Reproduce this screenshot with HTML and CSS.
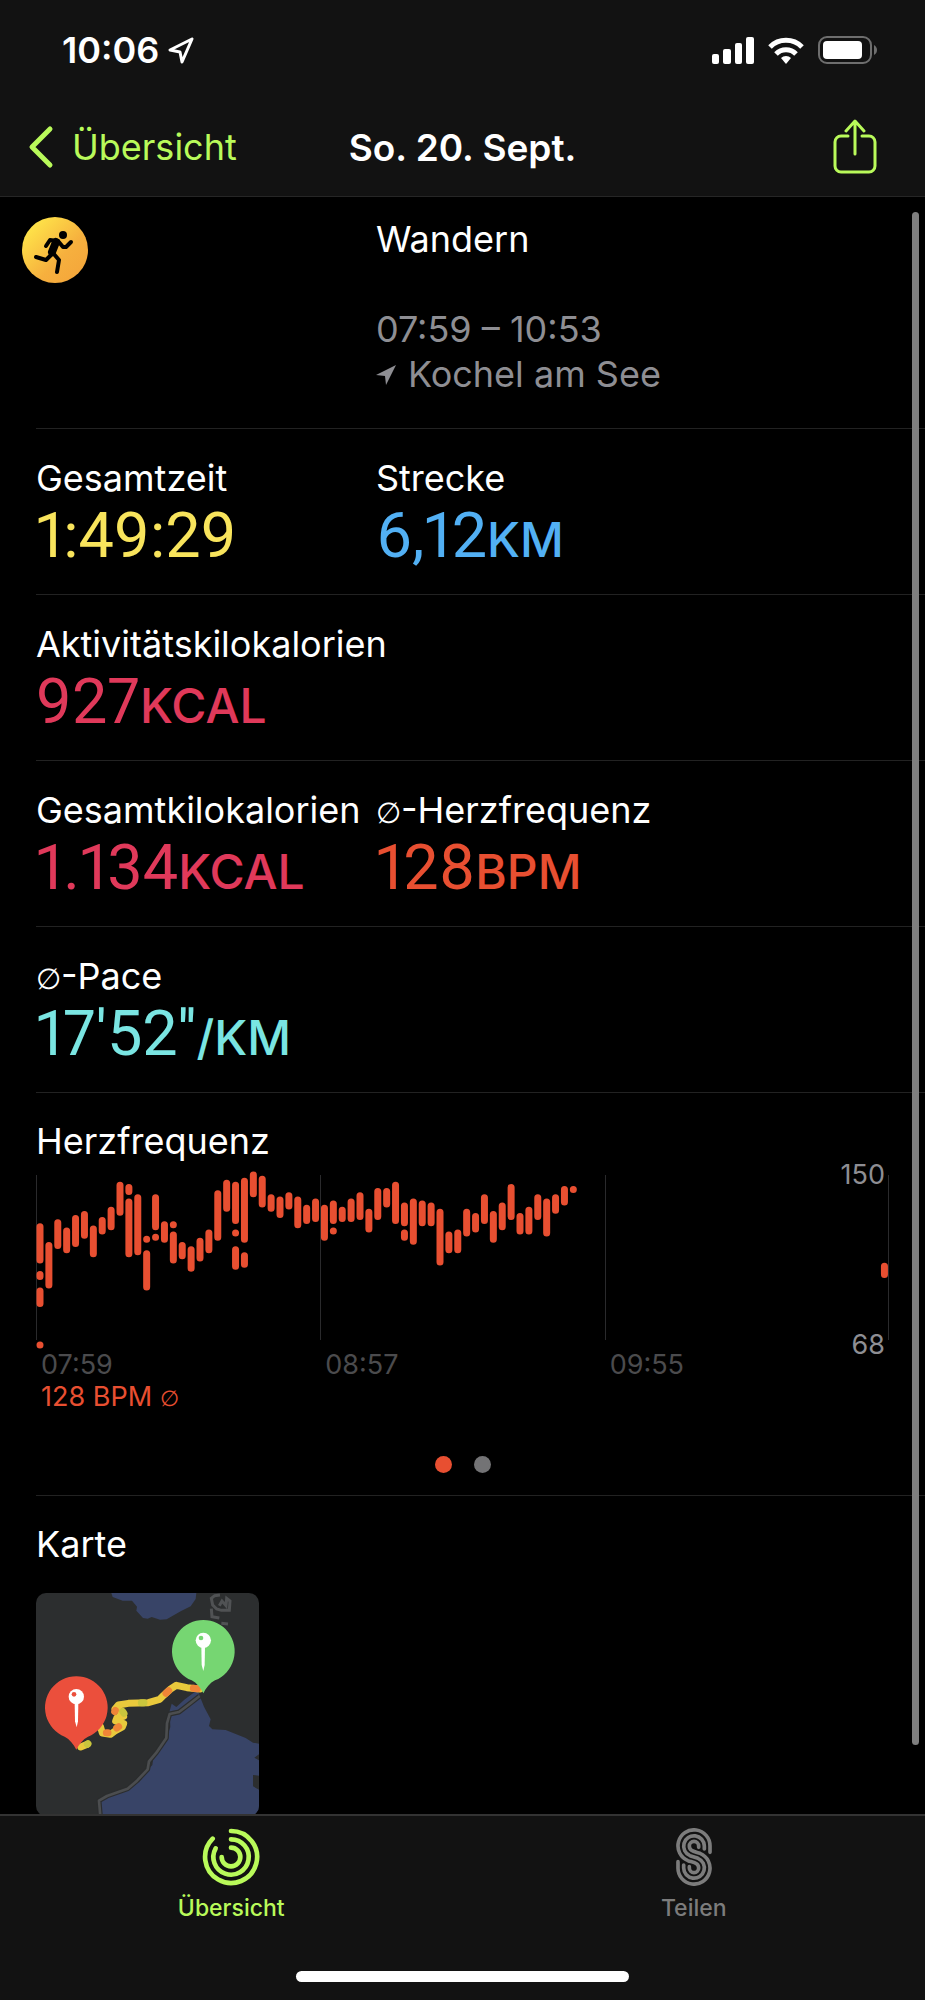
FILE: index.html
```html
<!DOCTYPE html>
<html lang="de">
<head>
  <meta charset="UTF-8">
  <meta name="viewport" content="width=device-width, initial-scale=1.0">
  <title>Wandern - So. 20. Sept.</title>
  <link rel="stylesheet" href="styles.css">
</head>
<body>

  <header class="header">
    <div class="status-bar">
      <div class="status-time">
        <span>10:06</span>
        <svg width="28" height="28" viewBox="0 0 28 28" fill="none" stroke="#fff" stroke-width="3" stroke-linejoin="round"><path d="M25 3 3 14l10 2 2 10z"/></svg>
      </div>
      <div class="status-icons">
        <svg width="42" height="27" viewBox="0 0 42 27" fill="#fff">
          <rect x="0" y="17" width="7" height="10" rx="2"/>
          <rect x="11" y="12" width="8" height="15" rx="2"/>
          <rect x="23" y="6" width="7" height="21" rx="2"/>
          <rect x="34" y="0" width="8" height="27" rx="2"/>
        </svg>
        <svg width="36" height="27" viewBox="0 0 36 27" fill="none" stroke="#fff" stroke-width="5">
          <path d="M2 10a22.500 22.500 0 0 1 32 0"/>
          <path d="M8 17a14 14 0 0 1 20 0"/>
          <path d="M18 27l-5-6a7 7 0 0 1 10 0z" fill="#fff" stroke="none"/>
        </svg>
        <svg width="60" height="28" viewBox="0 0 60 28">
          <rect x="1" y="1" width="52" height="26" rx="8" fill="none" stroke="#6e6e6e" stroke-width="2"/>
          <rect x="5" y="5" width="39" height="18" rx="4" fill="#fff"/>
          <path d="M56 9c4 2 4 8 0 10z" fill="#6e6e6e"/>
        </svg>
      </div>
    </div>

    <div class="nav-bar">
      <a class="back" href="#">
        <svg width="26" height="44" viewBox="0 0 26 44" fill="none" stroke="currentColor" stroke-width="5" stroke-linecap="round" stroke-linejoin="round"><path d="M22 4 4 22l18 18"/></svg>
        <span>Übersicht</span>
      </a>
      <h1 class="title">So. 20. Sept.</h1>
      <button class="share" aria-label="Teilen">
        <svg width="44" height="56" viewBox="0 0 44 56" fill="none" stroke="currentColor" stroke-width="3" stroke-linecap="round" stroke-linejoin="round">
          <path d="M15 17H8a6 6 0 0 0-6 6v24a6 6 0 0 0 6 6h28a6 6 0 0 0 6-6V23a6 6 0 0 0-6-6h-7"/>
          <path d="M22 35V3M13 12l9-10 9 10"/>
        </svg>
      </button>
    </div>
  </header>

  <main class="content">
    <section class="row workout">
      <svg class="workout-icon" width="66" height="66" viewBox="0 0 66 66">
        <defs>
          <linearGradient id="sun" x1="0" y1="0" x2="1" y2="1">
            <stop offset="0.1" stop-color="#ffe74a"/>
            <stop offset="0.6" stop-color="#f6b03e"/>
            <stop offset="1" stop-color="#f4a33a"/>
          </linearGradient>
        </defs>
        <circle cx="33" cy="33" r="33" fill="url(#sun)"/>
        <circle cx="41" cy="18" r="4"/>
        <g fill="none" stroke="#000" stroke-linecap="round" stroke-linejoin="round">
          <path d="M34 25l-4 10" stroke-width="8"/>
          <path d="M35 24l-7-1-4 6M36 24l5 6 3 0 5-5" stroke-width="4"/>
          <path d="M31 36l-7 7-10-3M31 36l6 7-2 12" stroke-width="4"/>
        </g>
      </svg>
      <div class="workout-info">
        <h2 class="label">Wandern</h2>
        <p class="workout-time">07:59 – 10:53</p>
        <p class="workout-place">
          <svg width="20" height="20" viewBox="0 0 20 20" fill="currentColor"><path d="M20 0 0 10l9 1 1 9z"/></svg>
          Kochel am See
        </p>
      </div>
    </section>

    <section class="row">
      <div>
        <h2 class="label">Gesamtzeit</h2>
        <p class="value yellow">1:49:29</p>
      </div>
      <div>
        <h2 class="label">Strecke</h2>
        <p class="value blue">6,12<span class="unit">KM</span></p>
      </div>
    </section>

    <section class="row">
      <div>
        <h2 class="label">Aktivitätskilokalorien</h2>
        <p class="value pink">927<span class="unit">KCAL</span></p>
      </div>
    </section>

    <section class="row">
      <div>
        <h2 class="label">Gesamtkilokalorien</h2>
        <p class="value pink">1.134<span class="unit">KCAL</span></p>
      </div>
      <div>
        <h2 class="label"><span class="avg">∅</span>-Herzfrequenz</h2>
        <p class="value orange">128<span class="unit">BPM</span></p>
      </div>
    </section>

    <section class="row">
      <div>
        <h2 class="label"><span class="avg">∅</span>-Pace</h2>
        <p class="value cyan">17'52''<span class="unit">/KM</span></p>
      </div>
    </section>

    <section class="block heart">
      <h2 class="label">Herzfrequenz</h2>
      <div class="chart">
        <svg class="chart-plot" viewBox="0 0 853 179">
          <path class="chart-grid" d="M0.500 5v165M284.500 5v165M569.500 5v165M852.500 5v165"/>
          <path class="chart-bars" id="bars"/>
        </svg>
        <span class="chart-max">150</span>
        <span class="chart-min">68</span>
        <div class="chart-times">
          <span>07:59</span>
          <span>08:57</span>
          <span>09:55</span>
        </div>
        <p class="chart-average">128 BPM <span class="avg">∅</span></p>
      </div>
      <div class="dots">
        <span class="dot active"></span>
        <span class="dot"></span>
      </div>
    </section>

    <section class="block">
      <h2 class="label">Karte</h2>
      <a class="map" href="#" aria-label="Karte öffnen">
        <svg viewBox="48 279 669 669">
          <rect x="48" y="279" width="669" height="669" fill="#2c2e2f"/>
          <g fill="#384467">
            <path d="M274 279l4 12 30 11 28 0 15 18-2 12 20 22 14 2 12-5 25 8 20-1 42-24 30-15 15-22 2-18z"/>
            <path d="M540 590l12 30 20 38-5 20 10 10 40 2 60 24 22 14 18 3v32l-14 10 14 8v46l-18-2 0 34 18 10v80H243l-4-44 22-14 60-20 30-24 46-52 4-26 38-52 12-36-2-48 6-22 14 10 24-22 40-30z"/>
          </g>
          <path d="M241 948l-4-46 24-14 62-22 28-24 32-34 4-24 22-26 30-44 2-44 8-28 28-6 34-26 28-22" fill="none" stroke="#2b2d2e" stroke-width="15" stroke-linejoin="round"/>
          <path d="M241 948l-4-46 24-14 62-22 28-24 32-34 4-24 22-26 30-44 2-44 8-28 28-6 34-26 28-22" fill="none" stroke="#4b4d4f" stroke-width="8" stroke-linejoin="round"/>
          <path d="M600 285l-16 2-10 8 4 20 12 12 14 4 24 0 2-28-10-8-2 22-12-14-8 14M574 326l2 24 22 4M604 370l20 2" fill="none" stroke="#505254" stroke-width="9"/>
          <g fill="none" stroke-linecap="round" stroke-linejoin="round" stroke-width="21">
            <path d="M540 567l-39-4-32-7-16 10-22 20-12 12-34 10-60 2-30 5-10 12 20 8 6 14-20 4-4 10 24 8-4 10-22 12-14 10-24-4-6-20M182 741l20-8" stroke="#e9c93c"/>
            <path d="M532 566l-12-1M446 572l-8 8M286 631l-2 4M296 680l-6 4M264 698l-5 0" stroke="#ef8537"/>
            <path d="M372 608l-8 0M308 634l4 6M204 731l-2 2" stroke="#c9c53d"/>
          </g>
          <g>
            <path d="M550 580c-8-17-20-31-35-39a94 94 0 1 1 70 0c-15 8-27 22-35 39z" fill="#76d672"/>
            <path d="M169 749c-8-17-20-31-35-39a94 94 0 1 1 70 0c-15 8-27 22-35 39z" fill="#eb4f3c"/>
          </g>
          <g fill="#fff">
            <circle cx="550" cy="421" r="23"/>
            <path d="M544 440h11l-1 55-4 18-5-18z"/>
            <circle cx="169" cy="590" r="23"/>
            <path d="M164 609h11l-1 55-4 18-5-18z"/>
          </g>
          <circle cx="543" cy="414" r="7" fill="#76d672"/>
          <circle cx="162" cy="583" r="7" fill="#eb4f3c"/>
        </svg>
      </a>
    </section>

    <div class="scroll-thumb"></div>
  </main>

  <nav class="tab-bar">
    <div class="tabs">
      <a class="tab active" href="#">
        <svg width="58" height="58" viewBox="-87 -87 174 174" fill="none" stroke="currentColor" stroke-width="14" stroke-linecap="round">
          <path d="M0-78A78 78 0 1 1-55-55"/>
          <path d="M0-53A53 53 0 1 1-46-26"/>
          <path d="M0-28A28 28 0 1 1-28 0"/>
        </svg>
        <span>Übersicht</span>
      </a>
      <a class="tab" href="#">
        <svg width="58" height="58" viewBox="-87 -87 174 174" fill="none" stroke="currentColor" stroke-width="11" stroke-linecap="round">
          <path d="M48-14V-33A48 48 0 1 0-18 11C0 17 14 18 14 33A14 14 0 0 1-14 33V29"/>
          <path d="M31-24V-33A31 31 0 1 0-12-4L12 4A31 31 0 1 1-31 33V24"/>
          <path d="M14-29V-33A14 14 0 0 0-14-33C-14-18 0-17 18-11A48 48 0 1 1-48 33V14"/>
        </svg>
        <span>Teilen</span>
      </a>
    </div>
    <div class="home-indicator"></div>
  </nav>

  <script>
    // [slot, lowest bpm, highest bpm]
    const samples = [
      [0, 109, 125], [0, 101, 102], [0, 88, 94], [0, 68, 68], [1, 97, 116], [2, 116, 127],
      [3, 114, 123], [4, 117, 129], [5, 121, 131], [6, 112, 124], [7, 123, 128], [8, 125, 133],
      [9, 132, 145], [10, 142, 144], [10, 112, 137], [11, 113, 139], [12, 119, 119], [12, 96, 112],
      [13, 125, 139], [13, 120, 120], [14, 119, 126], [15, 126, 126], [15, 109, 121], [16, 111, 116],
      [17, 105, 114], [18, 110, 118], [19, 114, 122], [20, 120, 141], [21, 134, 146], [22, 128, 145],
      [22, 122, 122], [22, 106, 114], [23, 119, 147], [23, 107, 111], [24, 141, 150], [25, 136, 148],
      [26, 134, 139], [27, 131, 138], [28, 135, 140], [29, 126, 138], [30, 128, 134], [31, 129, 137],
      [32, 120, 134], [33, 128, 136], [33, 123, 123], [34, 129, 133], [35, 129, 137], [36, 130, 140],
      [37, 124, 132], [38, 130, 142], [39, 136, 142], [40, 128, 145], [41, 127, 135], [41, 120, 122],
      [42, 118, 137], [43, 127, 136], [44, 127, 135], [45, 108, 132], [46, 114, 121], [47, 114, 122],
      [48, 122, 132], [49, 124, 130], [50, 128, 139], [51, 119, 131], [52, 125, 135], [53, 130, 144],
      [54, 123, 130], [55, 123, 133], [56, 130, 139], [57, 122, 137], [58, 133, 139], [59, 137, 143],
      [60, 143, 143], [95, 102, 106]
    ];

    const y = bpm => 5 + (150 - bpm) * 170 / 82;

    document.getElementById("bars").setAttribute("d", samples.map(([slot, low, high]) => {
      const x = 4 + slot * 80 / 9;
      return `M${x} ${y(high)}V${y(low) + 0.01}`;
    }).join(""));
  </script>

</body>
</html>
```
FILE: styles.css
```css
* {
  box-sizing: border-box;
}

body {
  margin: 0;
  height: 100vh;
  display: flex;
  flex-direction: column;
  overflow: hidden;
  background-color: #000;
  color: #fff;
  font-family: Inter, "Liberation Sans", sans-serif;
}

h1,
h2,
p {
  margin: 0;
  font-weight: 400;
}

a {
  color: inherit;
  text-decoration: none;
}

svg {
  display: block;
  flex-shrink: 0;
}

/* Header */
.header {
  background-color: #121212;
  border-bottom: 1px solid #262626;
}

.status-bar {
  height: 98px;
  padding: 2px 47px 0 62px;
  display: flex;
  justify-content: space-between;
  align-items: center;
}

.status-time {
  display: flex;
  align-items: center;
  gap: 8px;
  font-size: 36px;
  font-weight: 600;
}

.status-icons {
  display: flex;
  align-items: center;
  gap: 14px;
}

.nav-bar {
  height: 98px;
  padding: 0 28px;
  display: grid;
  grid-template-columns: 1fr auto 1fr;
  align-items: center;
}

.back {
  display: flex;
  align-items: center;
  gap: 18px;
  color: #b9fa5a;
  font-size: 36px;
}

.title {
  font-size: 37px;
  font-weight: 600;
}

.share {
  justify-self: end;
  padding: 0 20px;
  border: none;
  background: none;
  color: #b9fa5a;
  cursor: pointer;
}

/* Content */
.content {
  flex: 1;
  min-height: 0;
  position: relative;
  overflow: hidden;
}

.row,
.block {
  margin-left: 36px;
  border-bottom: 1px solid #222;
}

.row {
  padding: 27px 0 26px;
  display: grid;
  grid-template-columns: minmax(0, 13fr) minmax(0, 21fr);
  white-space: nowrap;
}

.block {
  padding: 26px 36px 22px 0;
}

.block:last-of-type {
  border-bottom: none;
}

.label {
  font-size: 36px;
  line-height: 45px;
}

.avg {
  font-family: "DejaVu Sans", sans-serif;
  font-size: 0.8em;
  font-weight: 200;
  line-height: 1;
}

.value {
  margin-top: 2px;
  font-family: Roboto, "Liberation Sans", sans-serif;
  font-size: 63px;
  font-variant-numeric: proportional-nums;
  line-height: 65px;
}

.unit {
  font-family: Inter, "Liberation Sans", sans-serif;
  font-size: 48px;
  font-weight: 500;
  line-height: 1;
}

.yellow {
  color: #f8e45c;
}

.blue {
  color: #52b0f4;
}

.pink {
  color: #e0395a;
}

.orange {
  color: #e84f31;
}

.cyan {
  color: #7ae5e2;
}

.workout {
  padding: 20px 0 31px;
}

.workout-icon {
  margin-left: -14px;
}

.workout-time,
.workout-place {
  color: #8e8e93;
  font-size: 36px;
  line-height: 45px;
}

.workout-time {
  margin-top: 45px;
}

.workout-place {
  display: flex;
  align-items: center;
  gap: 12px;
}

/* Chart */
.chart {
  position: relative;
  margin-top: 6px;
  font-size: 27px;
  line-height: 32px;
}

.chart-plot {
  width: 100%;
}

.chart-grid {
  fill: none;
  stroke: #2a2a2c;
  stroke-width: 1;
}

.chart-bars {
  fill: none;
  stroke: #e84f31;
  stroke-width: 7;
  stroke-linecap: round;
}

.chart-max,
.chart-min {
  position: absolute;
  right: 4px;
  color: #8e8e93;
}

.chart-max {
  top: -11px;
}

.chart-min {
  top: 159px;
}

.chart-times {
  display: grid;
  grid-template-columns: repeat(3, 1fr);
  color: #4b4b4d;
}

.chart-times span,
.chart-average {
  padding-left: 5px;
}

.chart-average {
  color: #e84f31;
}

.dots {
  margin-top: 43px;
  display: flex;
  justify-content: center;
  gap: 22px;
}

.dot {
  width: 17px;
  height: 17px;
  border-radius: 50%;
  background-color: #737375;
}

.dot.active {
  background-color: #e84f31;
}

/* Map */
.map {
  display: block;
  width: 223px;
  margin-top: 26px;
  border-radius: 10px;
  overflow: hidden;
}

.scroll-thumb {
  position: absolute;
  top: 15px;
  right: 6px;
  bottom: 69px;
  width: 7px;
  border-radius: 4px;
  background-color: #7f7f7f;
}

/* Tab bar */
.tab-bar {
  height: 186px;
  padding-bottom: 18px;
  display: flex;
  flex-direction: column;
  justify-content: space-between;
  align-items: center;
  border-top: 2px solid #333;
  background-color: #121212;
}

.tabs {
  width: 100%;
  padding-top: 12px;
  display: grid;
  grid-template-columns: 1fr 1fr;
}

.tab {
  display: flex;
  flex-direction: column;
  align-items: center;
  gap: 8px;
  color: #7c7c7c;
  font-size: 23px;
  font-weight: 500;
  line-height: 28px;
}

.tab.active {
  color: #b9fa5a;
}

.home-indicator {
  width: 36%;
  height: 11px;
  border-radius: 6px;
  background-color: #fff;
}
```
